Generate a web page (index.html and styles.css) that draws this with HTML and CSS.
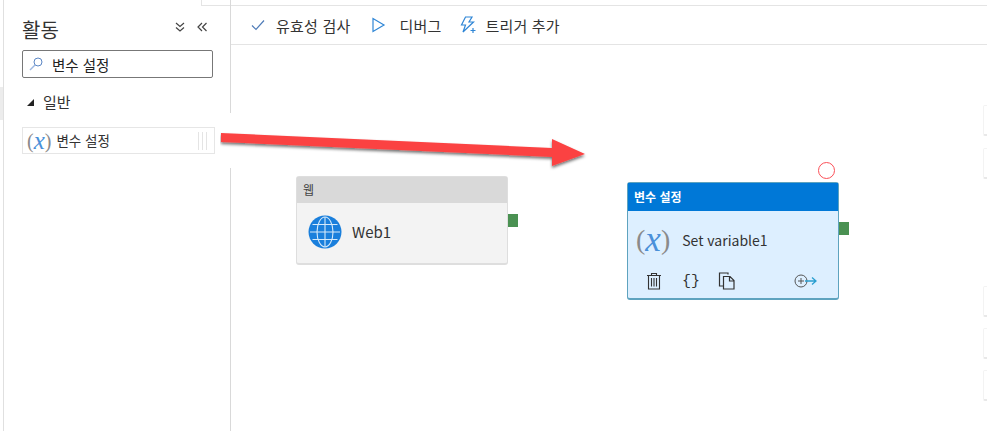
FILE: index.html
```html
<!DOCTYPE html>
<html lang="ko">
<head>
    <meta charset="UTF-8">
    <title>활동</title>
    <link rel="stylesheet" href="styles.css">
</head>
<body>
    <div class="page">
        <div class="edge"><div class="edge-tab"></div></div>
        <aside class="sidebar">
            <div class="side-top"></div>
            <div class="side-head">
                <h2>활동</h2>
                <div class="side-icons">
                    <svg width="12" height="12" viewBox="0 0 12 12"><path d="M2 2l4 3.500L10 2M2 6.500l4 3.500 4-3.500" class="line"/></svg>
                    <svg width="12" height="12" viewBox="0 0 12 12"><path d="M6 2L2 6l4 4M10.500 2l-4 4 4 4" class="line"/></svg>
                </div>
            </div>
            <div class="search">
                <svg width="16" height="16" viewBox="0 0 16 16"><circle cx="10" cy="6" r="4" fill="none" stroke="#5b86c4" stroke-width="1"/><path d="M7 9l-5 5" stroke="#9db7e0" stroke-width="1.500"/></svg>
                <span>변수 설정</span>
            </div>
            <div class="group">
                <svg width="9" height="9" viewBox="0 0 9 9"><path d="M8 1v7H1z" fill="#222"/></svg>
                <span>일반</span>
            </div>
            <div class="item">
                <span class="fx fx-small"><i>(</i><b>x</b><i>)</i></span>
                <span class="item-name">변수 설정</span>
                <span class="grip"></span>
            </div>
        </aside>
        <main class="main">
            <div class="toolbar">
                <div class="tool tool-check">
                    <svg width="16" height="16" viewBox="0 0 16 16"><path d="M2 8.500l4 4 8-9" fill="none" stroke="#4f7cb8" stroke-width="1.200"/></svg>
                    <span>유효성 검사</span>
                </div>
                <div class="tool tool-debug">
                    <svg width="16" height="16" viewBox="0 0 16 16"><path d="M3 1.500v13L14 8z" fill="none" stroke="#2f86d6" stroke-width="1.200"/></svg>
                    <span>디버그</span>
                </div>
                <div class="tool tool-trigger">
                    <svg width="18" height="18" viewBox="0 0 18 18"><path d="M6.500 1h6.500l-3 5h4.500L4 16l2.500-7H2.500zM14 12v5M11.500 14.500h5" fill="none" stroke="#2f86d6" stroke-width="1.200"/></svg>
                    <span>트리거 추가</span>
                </div>
            </div>
            <div class="canvas">
                <div class="node node-web">
                    <div class="node-head">웹</div>
                    <div class="node-body">
                        <svg width="34" height="34" viewBox="0 0 34 34">
                            <circle cx="17" cy="17" r="16.500" fill="#1a7fdc"/>
                            <g fill="none" stroke="#d5e9fa" stroke-width="1.100">
                                <ellipse cx="17" cy="17" rx="8" ry="15"/>
                                <path d="M17 2v30M2 17h30M4.500 9.500h25M4.500 24.500h25"/>
                            </g>
                        </svg>
                        <span>Web1</span>
                    </div>
                    <div class="port"></div>
                </div>
                <div class="node node-set">
                    <div class="node-head">변수 설정</div>
                    <div class="node-body">
                        <span class="fx"><i>(</i><b>x</b><i>)</i></span>
                        <span>Set variable1</span>
                    </div>
                    <div class="node-actions">
                        <svg width="16" height="18" viewBox="0 0 16 18"><path d="M1 3.500h14M5.500 3V1.500h5V3M2.500 3.500h11V17h-11zM5.500 6v8.500M8 6v8.500M10.500 6v8.500" fill="none" stroke="#333" stroke-width="1.100"/></svg>
                        <span class="braces">{}</span>
                        <svg width="18" height="18" viewBox="0 0 18 18"><path d="M10 2.500V1H1.500v13H5M5.500 4.500h6.500l4 4V17H5.500zM11.500 4.500V9H16" fill="none" stroke="#333" stroke-width="1.200"/></svg>
                        <svg class="act-end" width="23" height="14" viewBox="0 0 23 14"><circle cx="7" cy="7" r="6" fill="none" stroke="#555" stroke-width="1"/><path d="M4 7h6M7 4v6" stroke="#555" stroke-width="1"/><path d="M11 7h11M18 3.500L22 7l-4 3.500" fill="none" stroke="#2a9fd0" stroke-width="1.300"/></svg>
                    </div>
                    <div class="port"></div>
                    <div class="ring"></div>
                </div>
                <div class="side-tab tab1"></div>
                <div class="side-tab tab2"></div>
                <div class="side-tab tab3"></div>
                <div class="side-tab tab4"></div>
                <div class="side-tab tab5"></div>
            </div>
        </main>
        <svg class="arrow" width="380" height="60" viewBox="0 0 380 60">
            <defs>
                <filter id="shade" x="-5%" y="-20%" width="110%" height="150%">
                    <feDropShadow dx="0" dy="2" stdDeviation="1.500" flood-color="#000" flood-opacity="0.550"/>
                </filter>
            </defs>
            <rect x="0" y="0" width="16" height="55" fill="#fff"/>
            <path d="M1 20l331 15V26l33 15-33 12V44L1 29z" fill="#fb4343" filter="url(#shade)"/>
        </svg>
    </div>
</body>
</html>
```

FILE: styles.css
```css
html, body {
    margin: 0;
    padding: 0;
}
body {
    background: #fff;
    font-family: "Noto Sans CJK KR", "Open Sans", sans-serif;
    color: #333;
}
svg {
    display: block;
    flex-shrink: 0;
}
.page {
    position: relative;
    display: flex;
    width: 987px;
    height: 431px;
    overflow: hidden;
}
.edge {
    width: 3px;
    padding-top: 87px;
    border-right: 1px solid #e0e0e0;
}
.edge-tab {
    height: 33px;
    background: #ececec;
}
.sidebar {
    width: 208px;
    padding: 0 0 0 18px;
    border-right: 1px solid #d9d9d9;
}
.side-top {
    width: 28px;
    height: 5px;
    margin-left: auto;
    border-left: 1px solid #e4e4e4;
    border-bottom: 1px solid #e4e4e4;
}
.side-head {
    display: flex;
    justify-content: space-between;
    align-items: center;
    height: 44px;
    padding: 0 22px 2px 0;
    box-sizing: border-box;
}
.side-head h2 {
    margin: 5px 0 0;
    font-size: 20px;
    font-weight: 400;
    color: #333;
}
.side-icons {
    display: flex;
    gap: 10px;
}
.line {
    fill: none;
    stroke: #444;
    stroke-width: 1.200;
}
.search {
    display: flex;
    align-items: center;
    gap: 8px;
    width: 191px;
    height: 28px;
    box-sizing: border-box;
    padding-left: 5px;
    border: 1px solid #777;
    border-radius: 2px;
    font-size: 14.500px;
    color: #222;
}
.group {
    display: flex;
    align-items: center;
    gap: 8px;
    height: 49px;
    padding-left: 4px;
    font-size: 15px;
    color: #333;
}
.group span {
    margin-top: -3px;
}
.item {
    display: flex;
    align-items: center;
    width: 193px;
    height: 27px;
    box-sizing: border-box;
    padding-left: 4px;
    border: 1px solid #e6e6e6;
    background: #fff;
}
.item-name {
    margin-left: 5px;
    margin-top: -2px;
    font-size: 13.500px;
    color: #333;
}
.grip {
    width: 12px;
    height: 18px;
    margin-left: auto;
    margin-right: 4px;
    background: repeating-linear-gradient(90deg, #e4e4e4 0 1px, #fff 1px 4px);
}
.fx {
    display: inline-flex;
    align-items: center;
    font-family: "Liberation Serif", serif;
    font-size: 28px;
    line-height: 1;
}
.fx i {
    font-style: normal;
    color: #8a8a8a;
}
.fx b {
    font-size: 1.250em;
    font-style: italic;
    font-weight: 400;
    color: #4a90d9;
    line-height: 0.800;
}
.fx-small {
    font-size: 20px;
}
.main {
    flex: 1;
    display: flex;
    flex-direction: column;
}
.toolbar {
    display: flex;
    align-items: center;
    height: 38px;
    margin-top: 5px;
    padding-left: 19px;
    border-top: 1px solid #e4e4e4;
    border-bottom: 1px solid #e4e4e4;
}
.tool {
    display: flex;
    align-items: center;
    font-size: 15px;
    letter-spacing: 0.200px;
    color: #333;
}
.tool-check {
    gap: 10px;
}
.tool-debug {
    gap: 13px;
    margin-left: 20px;
}
.tool-trigger {
    gap: 8px;
    margin-left: 18px;
}
.canvas {
    position: relative;
    flex: 1;
}
.node {
    position: absolute;
    width: 212px;
    box-sizing: border-box;
    border-radius: 3px;
}
.node-head {
    padding-left: 6px;
    font-size: 12px;
}
.node-body {
    display: flex;
    align-items: center;
    font-size: 14px;
}
.node-web {
    left: 65px;
    top: 131px;
    height: 89px;
    background: #f3f3f3;
    border: 1px solid #dedede;
    border-bottom-width: 2px;
}
.node-web .node-head {
    height: 26px;
    line-height: 26px;
    background: #d9d9d9;
    color: #444;
}
.node-web .node-body {
    gap: 10px;
    height: 57px;
    padding-left: 11px;
    font-size: 15px;
    color: #333;
}
.node-set {
    left: 396px;
    top: 137px;
    height: 118px;
    background: #ddefff;
    border: 1px solid #5ea3bf;
    border-bottom-width: 2px;
}
.node-set .node-head {
    height: 28px;
    line-height: 28px;
    background: #0078d7;
    color: #fff;
    font-weight: 700;
}
.node-set .node-body {
    gap: 12px;
    height: 58px;
    padding-left: 8px;
    font-size: 14px;
    color: #333;
}
.node-actions {
    display: flex;
    align-items: center;
    gap: 20px;
    padding: 0 21px 0 18px;
    height: 24px;
}
.braces {
    width: 16px;
    text-align: center;
    font-size: 15px;
    color: #333;
    font-family: "Liberation Mono", monospace;
    white-space: nowrap;
}
.act-end {
    margin-left: auto;
}
.port {
    position: absolute;
    right: -11px;
    top: 37px;
    width: 10px;
    height: 13px;
    background: #4a9152;
}
.node-set .port {
    top: 39px;
}
.ring {
    position: absolute;
    right: 3px;
    top: -21px;
    width: 15px;
    height: 15px;
    border: 1.500px solid #fb4f57;
    border-radius: 50%;
    background: #fff;
}
.side-tab {
    position: absolute;
    left: 752px;
    width: 10px;
    height: 31px;
    border: 1px solid #f3f3f3;
    border-bottom: 2px solid #e8e8e8;
    border-radius: 2px;
    box-sizing: border-box;
}
.tab1 { top: 60px; }
.tab2 { top: 103px; }
.tab3 { top: 241px; }
.tab4 { top: 283px; }
.tab5 { top: 325px; }
.arrow {
    position: absolute;
    left: 220px;
    top: 113px;
}
```
